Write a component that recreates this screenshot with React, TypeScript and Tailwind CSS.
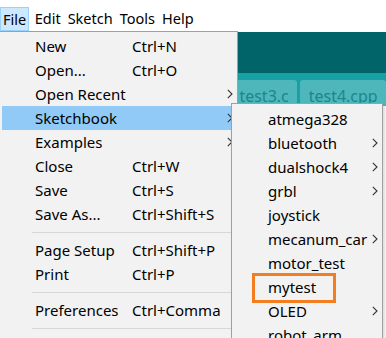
import { ReactNode } from 'react';

type MenuItem =
  | { kind: 'item'; label: string; shortcut?: string; sub?: boolean; active?: boolean }
  | { kind: 'sep' };

const fileMenu: MenuItem[] = [
  { kind: 'item', label: 'New', shortcut: 'Ctrl+N' },
  { kind: 'item', label: 'Open...', shortcut: 'Ctrl+O' },
  { kind: 'item', label: 'Open Recent', sub: true },
  { kind: 'item', label: 'Sketchbook', sub: true, active: true },
  { kind: 'item', label: 'Examples', sub: true },
  { kind: 'item', label: 'Close', shortcut: 'Ctrl+W' },
  { kind: 'item', label: 'Save', shortcut: 'Ctrl+S' },
  { kind: 'item', label: 'Save As...', shortcut: 'Ctrl+Shift+S' },
  { kind: 'sep' },
  { kind: 'item', label: 'Page Setup', shortcut: 'Ctrl+Shift+P' },
  { kind: 'item', label: 'Print', shortcut: 'Ctrl+P' },
  { kind: 'sep' },
  { kind: 'item', label: 'Preferences', shortcut: 'Ctrl+Comma' },
  { kind: 'sep' },
];

const sketches = [
  { name: 'atmega328' },
  { name: 'bluetooth', sub: true },
  { name: 'dualshock4', sub: true },
  { name: 'grbl', sub: true },
  { name: 'joystick' },
  { name: 'mecanum_car', sub: true },
  { name: 'motor_test' },
  { name: 'mytest' },
  { name: 'OLED', sub: true },
  { name: 'robot_arm' },
];

function Chevron({ className }: { className: string }) {
  return (
    <svg className={className} width="6" height="10" viewBox="0 0 6 10" fill="none">
      <path d="M0.8 0.8 L5 5 L0.8 9.2" stroke="#333" strokeWidth="1.1" />
    </svg>
  );
}

function Tab({ w, children }: { w: string; children?: ReactNode }) {
  return (
    <div className={`${w} h-[26px] rounded-t-[3px] bg-[#4db7bb] pl-[9px] pt-[6px] text-[16px] text-[#1f8589] leading-[20px]`}>
      {children}
    </div>
  );
}

export default function App() {
  return (
    <div className="relative w-[386px] h-[338px] overflow-hidden bg-white text-[15px] text-black font-['Noto_Sans',sans-serif]">
      {/* Menu bar */}
      <div className="flex h-[31px] items-end text-[14.5px]">
        {['File', 'Edit', 'Sketch', 'Tools', 'Help'].map((m, i) => (
          <div
            key={m}
            className={
              i === 0
                ? 'h-[24px] px-[2px] mr-[2px] leading-[22px] border border-[#99d1ff] bg-[#cce8ff]'
                : 'h-[24px] px-[3.5px] leading-[22px]'
            }
          >
            {m}
          </div>
        ))}
      </div>

      {/* Editor header behind the menus */}
      <div className="mt-[1px]">
        <div className="h-[41px] bg-[#006468]" />
        <div className="h-[7px] bg-[#17a1a5]" />
        <div className="flex gap-[3px] bg-[#17a1a5] pl-[4px]">
          <Tab w="w-[110px]" />
          <Tab w="w-[120px]" />
          <Tab w="w-[69px]">test3.c</Tab>
          <Tab w="w-[90px]">test4.cpp</Tab>
        </div>
      </div>

      {/* File menu */}
      <div className="absolute left-0 top-[31px] w-[238px] h-[320px] border-t border-r border-[#a0a0a0] bg-[#f2f2f2] pt-[2px]">
        {fileMenu.map((it, i) =>
          it.kind === 'sep' ? (
            <div key={i} className="h-[12px] flex items-center pl-[32px] pr-[2px]">
              <div className="h-px w-full bg-[#d7d7d7]" />
            </div>
          ) : (
            <div
              key={i}
              className={`relative mx-[2px] flex h-[24px] items-center ${it.active ? 'bg-[#91c9f7]' : ''}`}
            >
              <span className="w-[130px] pl-[33px]">{it.label}</span>
              {it.shortcut && <span>{it.shortcut}</span>}
              {it.sub && <Chevron className="absolute left-[225px] top-[7px]" />}
            </div>
          )
        )}
      </div>

      {/* Sketchbook submenu */}
      <div className="absolute left-[231px] top-[103px] w-[152px] h-[250px] border border-[#a0a0a0] bg-[#f2f2f2] pt-[3px] shadow-[2px_2px_3px_rgba(0,0,0,0.15)]">
        {sketches.map((s) => (
          <div key={s.name} className="relative flex h-[24px] items-center pl-[36px]">
            {s.name}
            {s.sub && <Chevron className="absolute left-[140px] top-[7px]" />}
          </div>
        ))}
        {/* highlight around the new sketch */}
        <div className="absolute left-[20px] top-[169px] h-[30px] w-[84px] border-[3px] border-[#f47d20]" />
      </div>
    </div>
  );
}
